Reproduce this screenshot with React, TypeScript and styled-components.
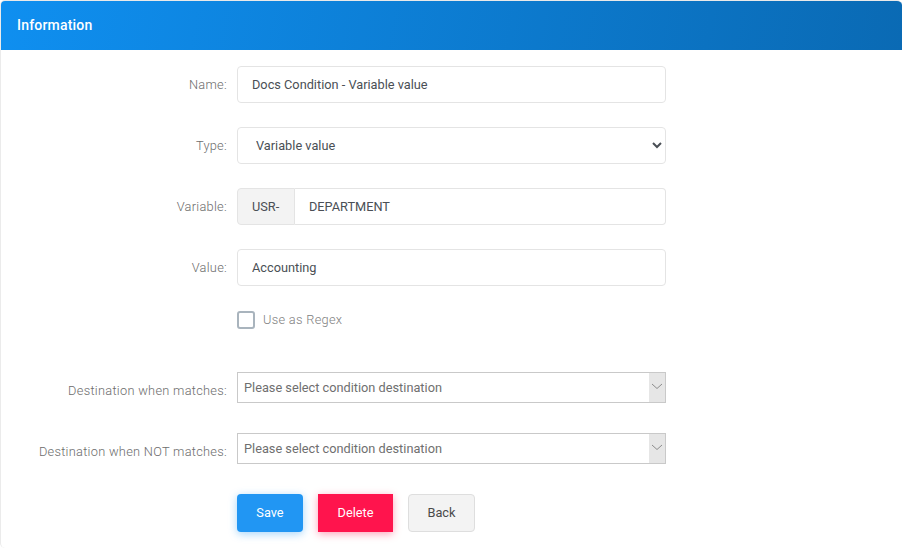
import styled, { createGlobalStyle } from "styled-components";

const GlobalStyle = createGlobalStyle`
  html, body {
    margin: 0;
    padding: 0;
    background: #fff;
    font-family: Roboto, "Liberation Sans", sans-serif;
  }
  * {
    box-sizing: border-box;
  }
`;

const Card = styled.div`
  width: 902px;
  height: 548px;
  background: #fff;
  border-top: 1px solid #e9e9e9;
  border-left: 1px solid #ebebeb;
  border-radius: 5px;
  overflow: hidden;
`;

const CardHeader = styled.div`
  height: 49px;
  padding: 0 16px 1px;
  display: flex;
  align-items: center;
  background: linear-gradient(100deg, #0f8ff0 0%, #0a6ab4 100%);
  color: #fff;
  font-size: 14px;
  font-weight: 500;
  letter-spacing: 0.2px;
`;

const Form = styled.form`
  padding-top: 16px;
  display: flex;
  flex-direction: column;
`;

const Row = styled.div<{ $gap?: number }>`
  display: grid;
  grid-template-columns: 226px 429px;
  column-gap: 10px;
  margin-bottom: ${(p) => p.$gap ?? 24}px;
`;

const Label = styled.label<{ $low?: boolean }>`
  text-align: right;
  color: #6c6c6c;
  font-size: 12.8px;
  font-weight: 300;
  letter-spacing: 0.28px;
  white-space: nowrap;
  height: ${(p) => (p.$low ? 31 : 37)}px;
  line-height: ${(p) => (p.$low ? 38 : 38)}px;
`;

const TextInput = styled.input`
  width: 100%;
  height: 37px;
  padding: 0 14px;
  border: 1px solid #e4e4e4;
  border-radius: 4px;
  background: #fff;
  color: #4a4f55;
  font-family: inherit;
  font-size: 12.75px;
  outline: none;
`;

const NativeSelect = styled.select`
  width: 100%;
  height: 37px;
  padding: 0 14px;
  border: 1px solid #e4e4e4;
  border-radius: 4px;
  background: #fff;
  color: #4a4f55;
  font-family: inherit;
  font-size: 12.75px;
  outline: none;
`;

const InputGroup = styled.div`
  display: flex;
  height: 37px;
`;

const Addon = styled.span`
  display: flex;
  align-items: center;
  width: 58px;
  padding: 0 14px;
  background: #f3f3f3;
  border: 1px solid #e4e4e4;
  border-radius: 4px 0 0 4px;
  color: #4a4f55;
  font-size: 12.75px;
`;

const GroupInput = styled(TextInput)`
  flex: 1;
  border-left: 0;
  border-radius: 0 4px 4px 0;
`;

const CheckRow = styled.label`
  grid-column: 2;
  display: flex;
  align-items: center;
  gap: 8px;
  height: 18px;
  color: #808080;
  font-size: 12.8px;
  font-weight: 300;
  letter-spacing: 0.3px;
`;

const CheckBox = styled.span`
  width: 18px;
  height: 18px;
  border: 2px solid #a9b4bd;
  border-radius: 3px;
  background: #fff;
`;

const CheckText = styled.span`
  margin-top: -2px;
`;

const Combo = styled.div`
  display: flex;
  align-items: stretch;
  height: 31px;
  border: 1px solid #c9c9c9;
  background: #fff;
`;

const ComboText = styled.span`
  flex: 1;
  padding-left: 6px;
  line-height: 29px;
  color: #6f6f6f;
  font-size: 12.75px;
`;

const ComboArrow = styled.span`
  width: 16px;
  display: flex;
  align-items: center;
  justify-content: center;
  padding-bottom: 2px;
  background: #e6e6e6;
`;

const Buttons = styled.div`
  grid-column: 2;
  display: flex;
  gap: 15px;
`;

const Button = styled.button<{ $kind: "save" | "delete" | "back" }>`
  height: 38px;
  font-family: inherit;
  font-size: 12.75px;
  cursor: pointer;
  padding: 0 0 1px;
  ${(p) =>
    p.$kind === "save"
      ? `width: 66px; background: #2196f3; color: #fff; border: 0; border-radius: 4px; box-shadow: 0 2px 8px rgba(33, 150, 243, 0.4);`
      : p.$kind === "delete"
        ? `width: 75px; background: #ff144d; color: #fff; border: 0; border-radius: 0; box-shadow: 0 2px 8px rgba(255, 20, 77, 0.4);`
        : `width: 67px; background: #f3f3f3; color: #4a4a4a; border: 1px solid #dedede; border-radius: 4px;`}
`;

function ComboBox({ text }: { text: string }) {
  return (
    <Combo>
      <ComboText>{text}</ComboText>
      <ComboArrow>
        <svg width="12" height="7" viewBox="0 0 12 7" fill="none">
          <path d="M1 1l5 4.5L11 1" stroke="#8c8c8c" strokeWidth="1" />
        </svg>
      </ComboArrow>
    </Combo>
  );
}

function App() {
  return (
    <>
      <GlobalStyle />
      <Card>
        <CardHeader>Information</CardHeader>
        <Form>
          <Row>
            <Label>Name:</Label>
            <TextInput defaultValue="Docs Condition - Variable value" />
          </Row>
          <Row>
            <Label>Type:</Label>
            <NativeSelect defaultValue="variable">
              <option value="variable">Variable value</option>
            </NativeSelect>
          </Row>
          <Row>
            <Label>Variable:</Label>
            <InputGroup>
              <Addon>USR-</Addon>
              <GroupInput defaultValue="DEPARTMENT" />
            </InputGroup>
          </Row>
          <Row $gap={25}>
            <Label>Value:</Label>
            <TextInput defaultValue="Accounting" />
          </Row>
          <Row $gap={43}>
            <CheckRow>
              <CheckBox />
              <CheckText>Use as Regex</CheckText>
            </CheckRow>
          </Row>
          <Row $gap={30}>
            <Label $low>Destination when matches:</Label>
            <ComboBox text="Please select condition destination" />
          </Row>
          <Row $gap={30}>
            <Label $low>Destination when NOT matches:</Label>
            <ComboBox text="Please select condition destination" />
          </Row>
          <Row>
            <Buttons>
              <Button type="button" $kind="save">Save</Button>
              <Button type="button" $kind="delete">Delete</Button>
              <Button type="button" $kind="back">Back</Button>
            </Buttons>
          </Row>
        </Form>
      </Card>
    </>
  );
}

export default App;
